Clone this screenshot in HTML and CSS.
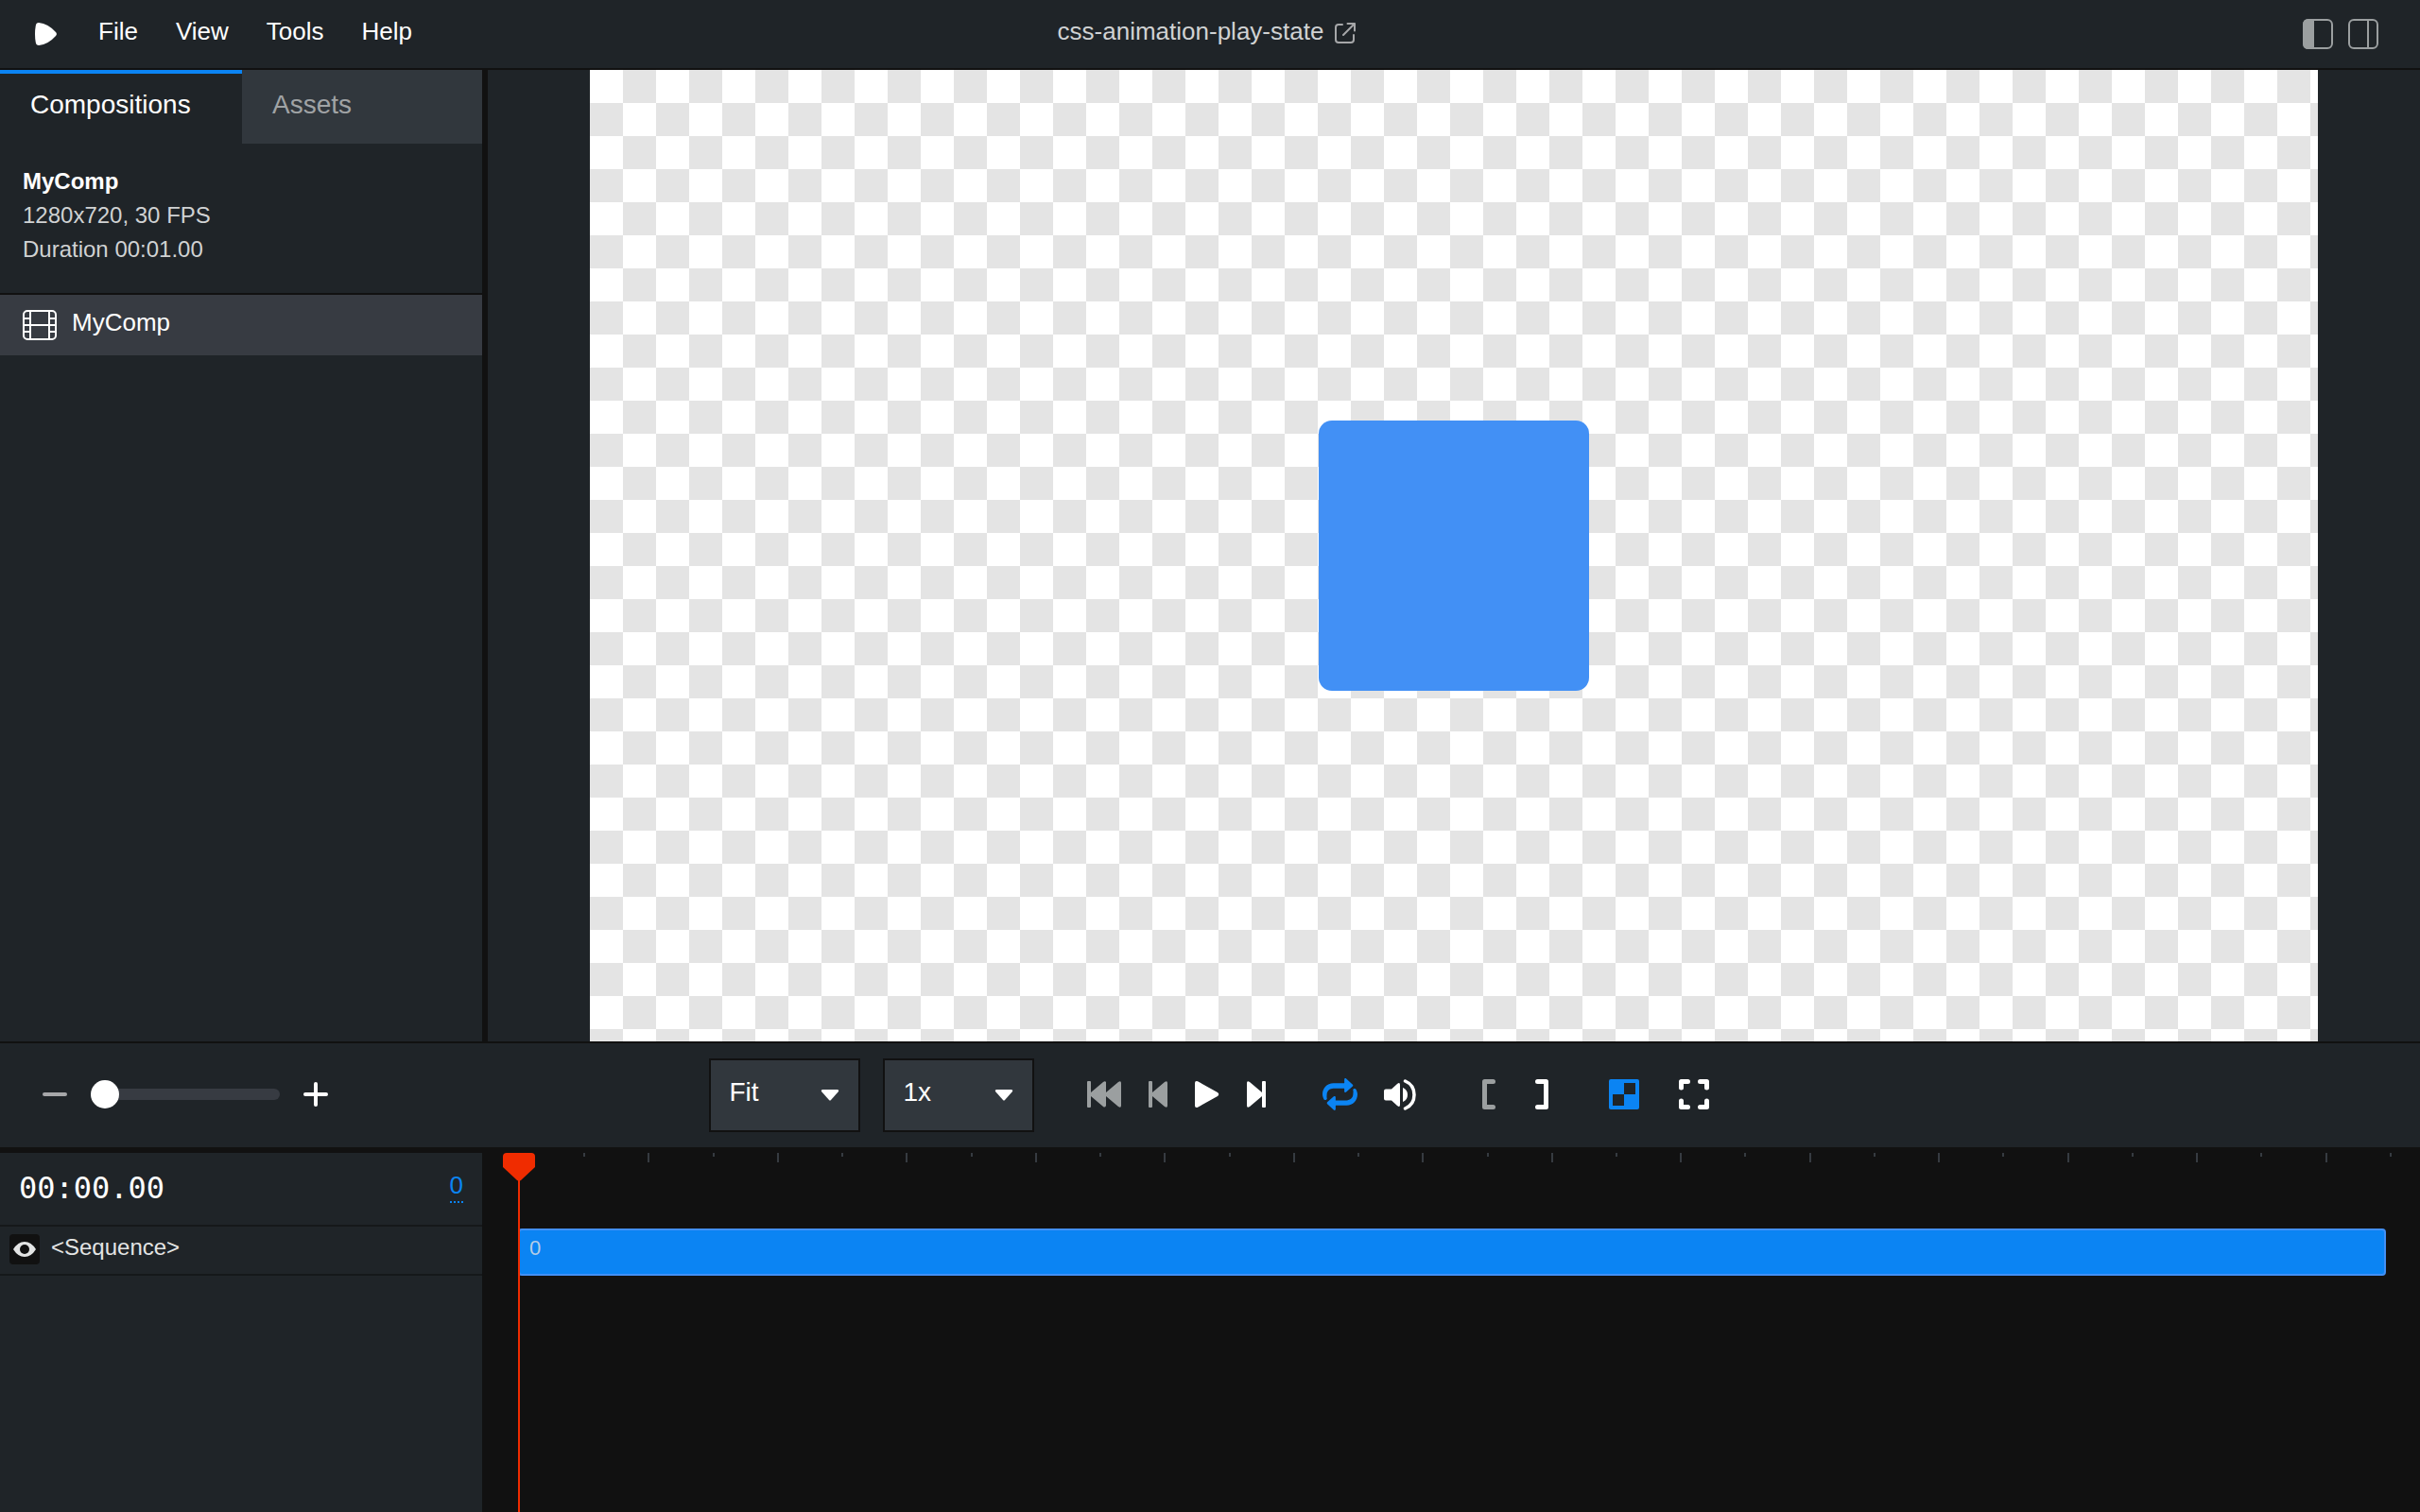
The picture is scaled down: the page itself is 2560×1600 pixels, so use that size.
FILE: index.html
```html
<!DOCTYPE html>
<html lang="en">
<head>
<meta charset="utf-8">
<title>css-animation-play-state</title>
<link rel="stylesheet" href="styles.css">
</head>
<body>
<div class="app">
  <header class="topbar">
    <nav class="menu">
      <svg class="logo" width="23" height="24" viewBox="0 0 23 24" aria-hidden="true"><path d="M4 0Q1.200 0 .8 3Q-.8 12 .8 21Q1.200 24 4.200 24Q14 23 22 14Q23.800 12 22 10Q14 1 4 0Z" fill="#fff"/></svg>
      <button>File</button>
      <button>View</button>
      <button>Tools</button>
      <button>Help</button>
    </nav>
    <a class="title" href="#project"><span>css-animation-play-state</span>
      <svg width="22" height="22" viewBox="0 0 22 22" fill="none" stroke="#a6a7a9" stroke-width="2" stroke-linecap="round" stroke-linejoin="round" aria-hidden="true"><path d="M8 2H4Q1 2 1 5V18Q1 21 4 21H17Q20 21 20 18V13M13.500 1H21V8.500M21 1L9 13"/></svg>
    </a>
    <div class="panels">
      <button aria-label="Toggle left sidebar"><svg width="32" height="32" viewBox="0 0 32 32"><rect x="1" y="1" width="30" height="30" rx="5" fill="none" stroke="#9b9fa0" stroke-width="2"/><path d="M6 0H12V32H6Q0 32 0 26V6Q0 0 6 0Z" fill="#9b9fa0"/></svg></button>
      <button aria-label="Toggle right sidebar"><svg width="32" height="32" viewBox="0 0 32 32" fill="none" stroke="#9b9fa0" stroke-width="2"><rect x="1" y="1" width="30" height="30" rx="5"/><path d="M21 1V31"/></svg></button>
    </div>
  </header>

  <main class="workspace">
    <aside class="sidebar">
      <div class="tabs">
        <button class="tab tab-active">Compositions</button>
        <button class="tab">Assets</button>
      </div>
      <div class="info">
        <strong>MyComp</strong>
        <span>1280x720, 30 FPS</span>
        <span>Duration 00:01.00</span>
      </div>
      <a class="comp" href="#MyComp">
        <svg width="36" height="32" viewBox="0 0 36 32" fill="none" stroke="#fff" stroke-width="2" aria-hidden="true"><rect x="1" y="1" width="34" height="30" rx="4"/><path d="M8 1V31M28 1V31M8 16H28M1 9H8M1 16H8M1 23H8M28 9H35M28 16H35M28 23H35"/></svg>
        <span>MyComp</span>
      </a>
    </aside>
    <section class="stage">
      <div class="canvas"><div class="square"></div></div>
    </section>
  </main>

  <div class="toolbar">
    <div class="zoom">
      <button aria-label="Zoom out"><svg width="26" height="26" viewBox="0 0 26 26"><rect y="11" width="26" height="4" rx="2" fill="#a6a7a9"/></svg></button>
      <input type="range" min="0" max="100" value="0" aria-label="Timeline zoom">
      <button aria-label="Zoom in"><svg width="26" height="26" viewBox="0 0 26 26" fill="#fff"><rect y="11" width="26" height="4" rx="2"/><rect x="11" width="4" height="26" rx="2"/></svg></button>
    </div>
    <div class="controls">
      <div class="selects">
        <label class="select"><select aria-label="Preview size"><option>Fit</option></select><svg width="20" height="12" viewBox="0 0 20 12" aria-hidden="true"><path d="M2 0H18Q20 .5 19 2L11 11Q10 12 9 11L1 2Q0 .5 2 0Z" fill="#fff"/></svg></label>
        <label class="select"><select aria-label="Playback rate"><option>1x</option></select><svg width="20" height="12" viewBox="0 0 20 12" aria-hidden="true"><path d="M2 0H18Q20 .5 19 2L11 11Q10 12 9 11L1 2Q0 .5 2 0Z" fill="#fff"/></svg></label>
      </div>
      <div class="transport">
        <button aria-label="Jump to beginning"><svg width="36" height="28" viewBox="0 0 36 28" fill="#9b9fa0"><path d="M1 0H3Q4 0 4 1V12L17 1Q19 -.5 20 1V12L33 1Q36 -.8 36 2V26Q36 28.800 33 27L20 16V26Q19 28.500 17 27L4 16V27Q4 28 3 28H1Q0 28 0 27V1Q0 0 1 0Z"/></svg></button>
        <button aria-label="Previous frame"><svg width="20" height="28" viewBox="0 0 20 28" fill="#9b9fa0"><path d="M1 0H3Q4 0 4 1V12L17 1Q20 -.8 20 2V26Q20 28.800 17 27L4 16V27Q4 28 3 28H1Q0 28 0 27V1Q0 0 1 0Z"/></svg></button>
        <button aria-label="Play"><svg width="26" height="28" viewBox="0 0 26 28" fill="#fff"><path d="M0 2Q0-.5 3 .3L24 12Q26.500 14 24 16L3 27.700Q0 28.500 0 26Z"/></svg></button>
        <button aria-label="Next frame"><svg width="20" height="28" viewBox="0 0 20 28" fill="#fff"><path d="M19 0H17Q16 0 16 1V12L3 1Q0 -.8 0 2V26Q0 28.800 3 27L16 16V27Q16 28 17 28H19Q20 28 20 27V1Q20 0 19 0Z"/></svg></button>
      </div>
      <div class="media">
        <button aria-label="Loop"><svg width="37" height="34" viewBox="0 0 512 512" preserveAspectRatio="none" fill="#0b84f3"><path d="M493.500 181.600C488.300 168.900 474 162 461 166.600C450 171 444 184 448.500 196C454 211 448 240 448 256C448 309 405 352 352 352H192V303C192 288 178 279 164 290L74 378C62 389 62 405 74 415L164 505C176 517 192 508 192 495V432H352C449 432 512 353 512 256C512 231 503 205 493.500 181.600ZM64 256C64 203 107 160 160 160H320V209C320 223 335 231 348 220L438 132C450 120 450 106 438 96L348 6C336 -5 320 3 320 17V80H160C63 80 0 159 0 256C0 281 9 307 18 330C23 344 38 350 51 345C64 340 68 326 64 314C59 297 64 272 64 256Z"/></svg></button>
        <button aria-label="Mute"><svg width="34" height="33" viewBox="0 0 34 33"><path d="M2 10.500H8L14 5Q17 2.800 17 6V27Q17 30.200 14 28L8 22.500H2Q0 22.500 0 20.500V12.500Q0 10.500 2 10.500ZM20 9Q25 11 25 16.500Q25 22 20 24Z" fill="#fff"/><path d="M22.500 2Q32 6 32 16.500Q32 27 22.500 31" fill="none" stroke="#fff" stroke-width="3.500" stroke-linecap="round"/></svg></button>
      </div>
      <div class="marks">
        <button aria-label="Mark in"><svg width="14" height="32" viewBox="0 0 14 32" fill="none" stroke="#9b9fa0" stroke-width="5" stroke-linecap="round" stroke-linejoin="round"><path d="M11.500 2.500H2.500V29.500H11.500"/></svg></button>
        <button aria-label="Mark out"><svg width="14" height="32" viewBox="0 0 14 32" fill="none" stroke="#fff" stroke-width="5" stroke-linecap="round" stroke-linejoin="round"><path d="M2.500 2.500H11.500V29.500H2.500"/></svg></button>
      </div>
      <div class="view">
        <button aria-label="Transparency checkerboard"><svg width="32" height="32" viewBox="0 0 32 32"><rect width="32" height="32" rx="2" fill="#0b84f3"/><path d="M16 4H28V16H16ZM4 16H16V28H4Z" fill="#1f2428"/></svg></button>
        <button aria-label="Fullscreen"><svg width="32" height="32" viewBox="0 0 32 32" fill="none" stroke="#fff" stroke-width="5" stroke-linecap="round" stroke-linejoin="round"><path d="M2.500 9V2.500H9.500M22.500 2.500H29.500V9M2.500 23V29.500H9.500M29.500 23V29.500H22.500"/></svg></button>
      </div>
    </div>
  </div>

  <section class="timeline">
    <div class="layers">
      <div class="time"><span class="timecode">00:00.00</span><button class="frame">0</button></div>
      <div class="layer">
        <button class="eye" aria-label="Toggle visibility"><svg width="24" height="16" viewBox="0 0 24 16"><path d="M12 0Q19 0 24 8Q19 16 12 16Q5 16 0 8Q5 0 12 0Z" fill="#e3e4e4"/><circle cx="12" cy="8" r="5" fill="#111"/></svg></button>
        <span>&lt;Sequence&gt;</span>
      </div>
    </div>
    <div class="tracks">
      <div class="ticks"><i></i><i></i><i></i><i></i><i></i><i></i><i></i><i></i><i></i><i></i><i></i><i></i><i></i><i></i><i></i><i></i><i></i><i></i><i></i><i></i><i></i><i></i><i></i><i></i><i></i><i></i><i></i><i></i><i></i></div>
      <div class="clip">0</div>
      <div class="playhead"><svg width="34" height="30" viewBox="0 0 34 30" aria-hidden="true"><path d="M4 0H30Q34 0 34 4V15L19 29Q17 30 15 29L0 15V4Q0 0 4 0Z" fill="#f02c00"/></svg></div>
    </div>
  </section>
</div>
</body>
</html>
```

FILE: styles.css
```css
* { box-sizing: border-box; }

body {
  margin: 0;
  background: #111;
  color: #fff;
  font-family: "Liberation Sans", Arial, Helvetica, sans-serif;
  font-size: 26px;
}

button, select {
  margin: 0;
  padding: 0;
  border: 0;
  background: none;
  color: inherit;
  font: inherit;
}

a { color: inherit; text-decoration: none; }
svg { display: block; flex: none; }

.app {
  display: flex;
  flex-direction: column;
  height: 100vh;
}

/* Top bar */
.topbar {
  display: grid;
  grid-template-columns: 1fr auto 1fr;
  align-items: center;
  height: 74px;
  padding: 0 44px 0 37px;
  background: #1f2428;
  border-bottom: 2px solid #111;
}
.menu { display: flex; align-items: center; gap: 40px; }
.menu button, .title span { padding-bottom: 6px; line-height: 32px; }
.logo { margin-right: 4px; }
.title { display: flex; align-items: center; gap: 12px; color: #d0d2d3; }
.title svg { margin-bottom: 2px; }
.panels { display: flex; justify-content: flex-end; gap: 16px; }

/* Workspace */
.workspace { display: flex; flex: 1; min-height: 0; }
.sidebar {
  flex: none;
  width: 510px;
  background: #1f2428;
}
.tabs { display: flex; height: 78px; }
.tab {
  flex: 1;
  padding: 0 32px 4px;
  background: #31373d;
  color: #a0a3a5;
  font-size: 28px;
  text-align: left;
}
.tab-active {
  flex: none;
  width: 256px;
  padding-bottom: 8px;
  border-top: 4px solid #0b84f3;
  background: none;
  color: #fff;
}
.info {
  display: flex;
  flex-direction: column;
  height: 160px;
  padding: 22px 24px;
  border-bottom: 2px solid #111;
  color: #d0d2d3;
  font-size: 24px;
  line-height: 36px;
}
.info strong { color: #fff; }
.comp {
  display: flex;
  align-items: center;
  gap: 16px;
  height: 64px;
  padding: 0 24px;
  background: #373b42;
}
.comp span { padding-bottom: 6px; }

.stage {
  display: flex;
  flex: 1;
  justify-content: center;
  margin-left: 6px;
  background: #1f2428;
}
.canvas {
  display: flex;
  align-items: center;
  justify-content: center;
  height: 100%;
  aspect-ratio: 16 / 9;
  background: repeating-conic-gradient(#e4e4e4 0 25%, #fff 0 50%) 0 0 / 70px 70px;
}
.square {
  width: 286px;
  height: 286px;
  border-radius: 14px;
  background: #4290f5;
}

/* Toolbar */
.toolbar {
  display: grid;
  grid-template-columns: 1fr auto 1fr;
  align-items: center;
  height: 112px;
  padding-right: 3px;
  border-top: 2px solid #111;
  background: #1f2428;
}
.toolbar button { padding-bottom: 2px; }
.zoom { display: flex; align-items: center; gap: 25px; padding-left: 45px; }
.zoom input {
  width: 200px;
  height: 12px;
  margin: 0 0 2px;
  border-radius: 6px;
  appearance: none;
  background: #373b42;
}
.zoom input::-webkit-slider-thumb {
  width: 30px;
  height: 30px;
  border-radius: 50%;
  appearance: none;
  background: #fff;
}
.controls { display: flex; align-items: center; gap: 56px; }
.selects { display: flex; gap: 24px; }
.select { display: grid; align-items: center; }
.select select, .select svg { grid-area: 1 / 1; }
.select select {
  width: 160px;
  height: 78px;
  padding: 0 20px 8px;
  border: 2px solid #111;
  appearance: none;
  background: #31373d;
  font-size: 28px;
}
.select svg { justify-self: end; margin-right: 22px; pointer-events: none; }
.transport { display: flex; align-items: center; gap: 29px; margin-right: 4px; }
.media { display: flex; align-items: center; gap: 28px; }
.marks { display: flex; gap: 42px; margin: 0 8px 0 14px; }
.view { display: flex; gap: 42px; }

/* Timeline */
.timeline {
  display: flex;
  height: 386px;
  border-top: 6px solid #111;
}
.layers { flex: none; width: 510px; background: #1f2428; }
.time {
  display: flex;
  align-items: center;
  justify-content: space-between;
  height: 78px;
  padding: 0 20px 2px;
  border-bottom: 2px solid #15181a;
}
.timecode { font-family: "DejaVu Sans Mono", monospace; font-size: 32px; }
.frame {
  margin-bottom: 4px;
  border-bottom: 2px dotted #0b84f3;
  color: #0b84f3;
  line-height: 34px;
}
.layer {
  display: flex;
  align-items: center;
  gap: 12px;
  height: 52px;
  padding: 0 10px 2px;
  border-bottom: 2px solid #15181a;
  color: #e3e4e4;
  font-size: 24px;
}
.layer span { padding-bottom: 4px; }
.eye {
  display: grid;
  place-items: center;
  width: 32px;
  height: 32px;
  border-radius: 4px;
  background: #111;
}
.tracks { position: relative; flex: 1; }
.ticks { display: flex; height: 80px; padding: 0 30px 0 41px; }
.ticks i { flex: 1; height: 4px; border-right: 2px solid #363b41; }
.ticks i:nth-child(even) { height: 10px; }
.clip {
  height: 50px;
  margin: 0 36px 0 38px;
  padding: 4px 10px;
  border: 2px solid #4290f5;
  border-radius: 4px;
  background: #0b84f3;
  color: #b5cde6;
  font-size: 22px;
  line-height: 30px;
}
.playhead {
  position: absolute;
  top: 0;
  bottom: 0;
  left: 22px;
  width: 34px;
  background: linear-gradient(#f02c00, #f02c00) center / 2px 100% no-repeat;
}
```
